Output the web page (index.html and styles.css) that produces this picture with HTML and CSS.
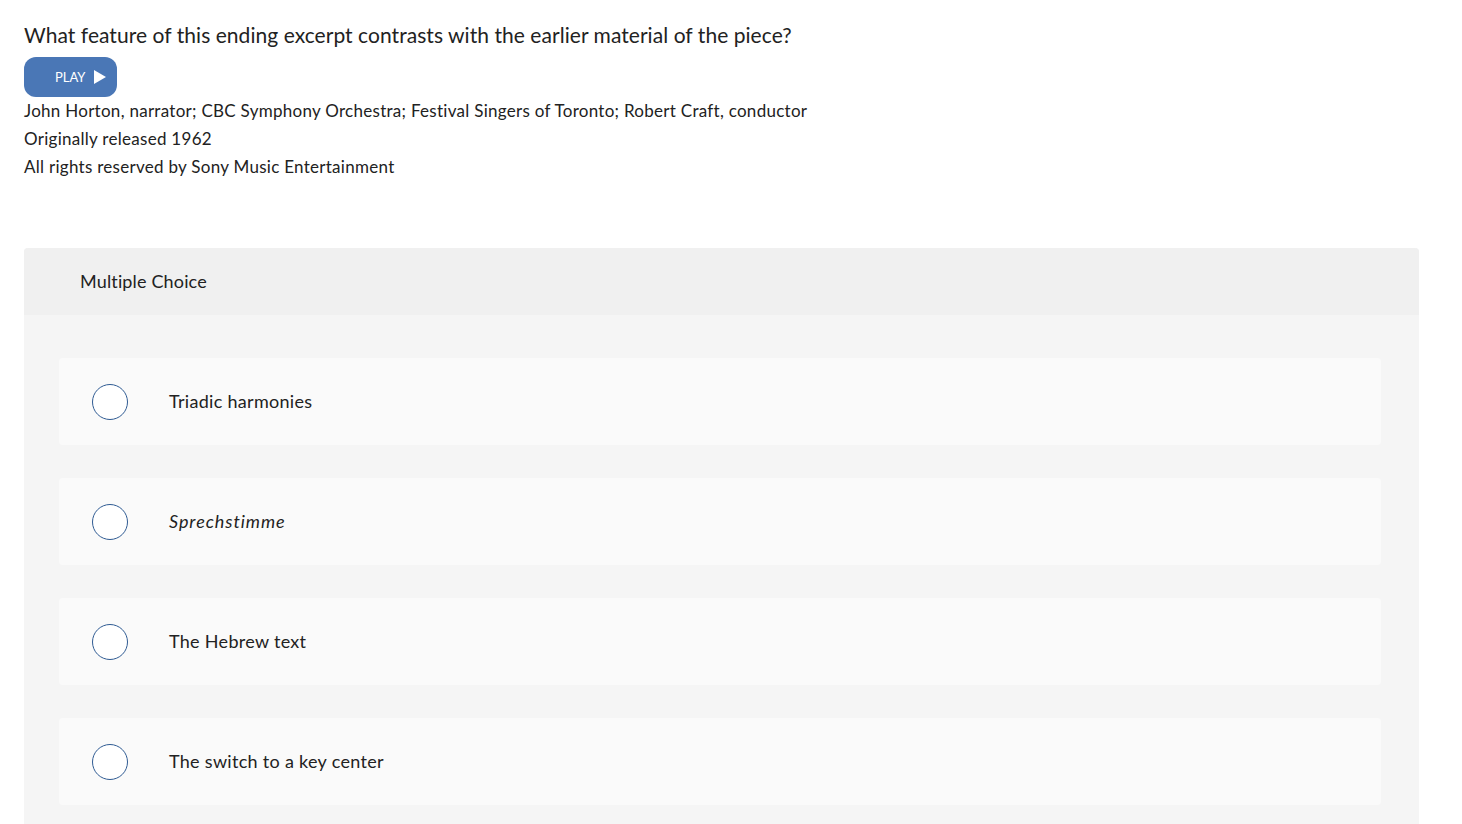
FILE: index.html
```html
<!DOCTYPE html>
<html lang="en">
<head>
<meta charset="utf-8">
<title>Multiple Choice</title>
<link rel="stylesheet" href="styles.css">
</head>
<body>
<main class="page">
  <section class="prompt">
    <p class="question">What feature of this ending excerpt contrasts with the earlier material of the piece?</p>
    <button class="play" type="button"><span>PLAY</span><svg class="play-icon" width="12" height="14" viewBox="0 0 12 14"><path d="M0 0 L12 7 L0 14 Z" fill="#fff"/></svg></button>
    <p class="credit">John Horton, narrator; CBC Symphony Orchestra; Festival Singers of Toronto; Robert Craft, conductor</p>
    <p class="credit">Originally released 1962</p>
    <p class="credit">All rights reserved by Sony Music Entertainment</p>
  </section>
  <section class="panel">
    <header class="panel-head">Multiple Choice</header>
    <div class="panel-body">
      <label class="option"><span class="radio"></span><span class="opt-text">Triadic harmonies</span></label>
      <label class="option"><span class="radio"></span><span class="opt-text"><em>Sprechstimme</em></span></label>
      <label class="option"><span class="radio"></span><span class="opt-text">The Hebrew text</span></label>
      <label class="option"><span class="radio"></span><span class="opt-text">The switch to a key center</span></label>
    </div>
  </section>
</main>
</body>
</html>
```
FILE: styles.css
```css
html, body {
  margin: 0;
  padding: 0;
  background: #fff;
}
body {
  font-family: Lato, "Open Sans", Arial, sans-serif;
  color: #222;
}
.page {
  padding: 21px 43px 0 24px;
}
.prompt p {
  margin: 0;
}
.question {
  font-size: 21px;
  line-height: 27px;
  letter-spacing: 0.05px;
  margin-bottom: 9px !important;
}
.play {
  display: flex;
  align-items: center;
  gap: 8px;
  height: 40px;
  width: 93px;
  padding: 0 0 0 31px;
  border: none;
  border-radius: 12px;
  background: #4a77b6;
  color: #fff;
  font-family: inherit;
  font-size: 13px;
  margin-bottom: 0;
}
.credit {
  font-size: 17px;
  line-height: 28px;
  letter-spacing: 0.28px;
}
.panel {
  margin-top: 67px;
  border-radius: 4px 4px 0 0;
  overflow: hidden;
  background: #f5f5f5;
}
.panel-head {
  background: #f0f0f0;
  height: 67px;
  display: flex;
  align-items: center;
  padding-left: 56px;
  padding-bottom: 2px;
  box-sizing: border-box;
  font-size: 18px;
  letter-spacing: 0.15px;
}
.panel-body {
  padding: 43px 38px 20px 35px;
  display: flex;
  flex-direction: column;
  gap: 33px;
}
.option {
  display: flex;
  align-items: center;
  height: 87px;
  background: #fafafa;
  border-radius: 4px;
  padding-left: 33px;
}
.radio {
  width: 34px;
  height: 34px;
  border: 1px solid #2f5b93;
  border-radius: 50%;
  background: #fff;
  flex: none;
}
.opt-text {
  margin-left: 41px;
  margin-bottom: 2px;
  font-size: 18px;
  line-height: 22px;
  letter-spacing: 0.3px;
}
.opt-text em {
  letter-spacing: 0.95px;
}
```
